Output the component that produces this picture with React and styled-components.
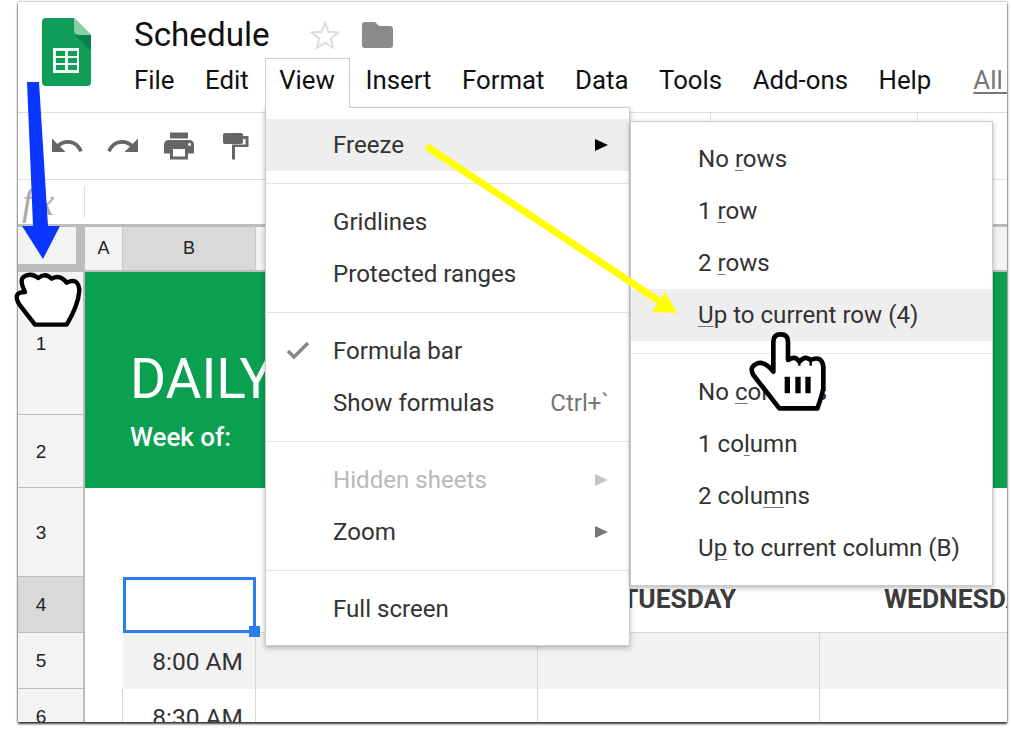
import React from 'react';
import styled, { createGlobalStyle } from 'styled-components';

const Global = createGlobalStyle`
  html, body { margin: 0; background: #fff; overflow: hidden; }
  * { box-sizing: border-box; }
`;
const UI = `"Roboto", "Liberation Sans", sans-serif`;
const SANS = `"Liberation Sans", Arial, sans-serif`;

const Page = styled.div`
  position: relative; width: 1012px; height: 731px;
  padding: 2px 5px 9px 18px; font-family: ${UI}; color: #222;
`;
const Window = styled.div`
  position: relative; height: 100%; display: flex; flex-direction: column;
  overflow: hidden; background: #fff;
`;
const WindowShadow = styled.div`
  height: 100%; box-shadow: 0 2px 2px rgba(0,0,0,.75), 0 0 2px rgba(0,0,0,.55);
`;
const Header = styled.header`
  flex: none; height: 111px; display: flex; border-bottom: 1px solid #ddd;
`;
const LogoSlot = styled.div`flex: none; width: 116px; padding: 16px 0 0 24px;`;
const TitleColumn = styled.div`flex: 1; min-width: 0; display: flex; flex-direction: column;`;
const TitleRow = styled.div`height: 56px; display: flex; align-items: center; padding-top: 9px;`;
const DocTitle = styled.h1`margin: 0; font: 400 33.2px/40px ${UI}; color: #111; width: 136px; white-space: nowrap;`;
const StarIcon = styled.svg`margin-left: 40px; width: 30px; height: 28px; flex: none;`;
const FolderIcon = styled.svg`margin-left: 22px; width: 31px; height: 26px; flex: none;`;
const MenuBar = styled.nav`display: flex; gap: 30.5px; height: 44px; align-items: center; white-space: nowrap;`;
const MenuTitle = styled.span`
  position: relative; font-size: 25.8px; color: #111;
  ${p => p.$open && `
    &::before {
      content: ''; position: absolute; left: -14px; right: -15px; top: -7px; bottom: -13px;
      border: 1px solid #ccc; border-bottom: none; background: #fff; z-index: 3;
    }
    & > span { position: relative; z-index: 4; }
  `}
`;
const AllChanges = styled.span`margin-left: 11.5px; font-size: 25.8px; color: #777; text-decoration: underline; text-underline-offset: 3px;`;

const Toolbar = styled.div`
  flex: none; height: 67px; display: flex; align-items: center; padding-left: 31px;
  border-bottom: 1px solid #ddd;
`;
const ToolIcon = styled.svg`
  flex: none; width: 36px; height: 36px; fill: #666; margin-right: 20px;
`;
const PaintIcon = styled.svg`flex: none; width: 26px; height: 27px; margin-left: 6px; fill: #666;`;
const ToolDivider = styled.span`
  flex: none; align-self: stretch; width: 1px; background: #ddd; margin-left: ${p => p.$gap}px;
`;
const FormulaBar = styled.div`
  flex: none; height: 47px; display: flex; align-items: center; border-bottom: 3px solid #bcbcbc;
`;
const FxLabel = styled.span`
  width: 66px; padding-left: 4px; font: italic 400 38px/1 "Liberation Serif", serif; color: #aaa; letter-spacing: 5px;
`;
const FxDivider = styled.span`width: 1px; height: 32px; background: #ddd;`;

const Sheet = styled.div`
  flex: 1; display: grid; overflow: hidden;
  grid-template-columns: 67px 38px 133px 282px 282px 282px;
  grid-template-rows: 45px 143px 73px 89px 56px 56px 56px;
  font-family: ${SANS}; color: #222;
`;
const Corner = styled.div`background: #bcbcbc; padding: 0 9px 8px 0;`;
const CornerFill = styled.div`height: 100%; background: #f3f3f3;`;
const ColHead = styled.div`
  display: flex; align-items: center; justify-content: center;
  font-size: 18px; border-right: 1px solid #c8c8c8; border-bottom: 2px solid #bcbcbc;
  background: ${p => (p.$active ? '#d9d9d9' : '#f3f3f3')};
`;
const RowHead = styled.div`
  grid-column: 1; display: flex; align-items: center; justify-content: center; padding: 1px 19px 0 0;
  font-size: 19px; border-right: 2px solid #bcbcbc; border-bottom: 1px solid #bcbcbc;
  background: ${p => (p.$active ? '#d9d9d9' : '#f3f3f3')};
`;
const Band = styled.div`
  grid-column: 2 / -1; grid-row: 2 / span 2; background: #0aa050; color: #fff;
  display: flex; flex-direction: column; padding: 76px 0 0 45px; font-family: ${UI};
`;
const BandTitle = styled.div`font-size: 55px; line-height: 62px; white-space: nowrap;`;
const BandSub = styled.div`font-size: 26px; line-height: 30px; margin-top: 12px; font-weight: 500;`;
const Cell = styled.div`
  display: flex; align-items: center; justify-content: ${p => p.$end ? 'flex-end' : 'center'};
  padding-right: ${p => p.$end ? 12 : 0}px; font-family: ${UI}; font-size: 24.5px; color: #333;
  background: ${p => (p.$shade ? '#f2f2f2' : '#fff')};
  ${p => p.$line && 'border-right: 1px solid #d6d6d6;'}
  ${p => p.$under && 'border-bottom: 1px solid #d6d6d6;'}
`;
const DayCell = styled(Cell)`font-size: 26.4px; font-weight: 700; color: #3c3c3c; padding-bottom: 12px; white-space: nowrap;`;
const SelectedCell = styled.div`
  position: relative; border: 3px solid #2b7df0; background: #fff;
  &::after {
    content: ''; position: absolute; right: -7px; bottom: -7px; width: 11px; height: 11px; background: #2b7df0;
  }
`;

const Menu = styled.div`
  position: absolute; left: ${p => p.$left}px; top: ${p => p.$top}px; width: ${p => p.$width}px;
  background: #fff; border: 1px solid #ccc; padding: ${p => p.$pad}px 0 ${p => p.$padEnd}px;
  box-shadow: 0 2px 5px rgba(0,0,0,.28); z-index: 2; font-family: ${UI};
`;
const MenuRow = styled.div`
  position: relative; height: 52px; display: flex; align-items: center; padding: 0 20px 0 67px;
  font-size: 24.1px; white-space: nowrap;
  color: ${p => (p.$disabled ? '#b9b9b9' : '#333')};
  background: ${p => (p.$active ? '#eeeeee' : 'transparent')};
  u { text-decoration-thickness: 1px; text-underline-offset: 3px; text-decoration-color: #777; }
`;
const MenuLabel = styled.span`flex: 1;`;
const Shortcut = styled.span`color: #777;`;
const SubArrow = styled.span`
  width: 0; height: 0; border-style: solid; border-width: 6px 0 6px 13px; margin-right: 1px;
  border-color: transparent transparent transparent ${p => (p.$disabled ? '#c4c4c4' : p.$dark ? '#000' : '#777')};
`;
const CheckIcon = styled.svg`position: absolute; left: 19px; top: 15px; width: 25px; height: 20px;`;
const MenuDivider = styled.div`height: 1px; background: #e4e4e4; margin: 12px 0;`;

const Overlay = styled.svg`position: absolute; left: 0; top: 0; width: 1012px; height: 731px; z-index: 5; pointer-events: none;`;
const Cursor = styled.svg`
  position: absolute; left: ${p => p.$x}px; top: ${p => p.$y}px; z-index: 6;
`;

const Logo = () => (
  <svg width="49" height="68" viewBox="0 0 49 68">
    <path d="M4 0H32L49 17V64a4 4 0 0 1-4 4H4a4 4 0 0 1-4-4V4a4 4 0 0 1 4-4z" fill="#0f9d58" />
    <path d="M33 17L49 33V17z" fill="#0b8048" />
    <path d="M32 0L49 17H37a5 5 0 0 1-5-5z" fill="#87cfac" />
    <rect x="11" y="30" width="26" height="25" fill="#f1f8f4" />
    {[33, 40, 47].map(y => [14, 26].map(x => <rect key={`${x}-${y}`} x={x} y={y} width="9" height="5" fill="#0f9d58" />))}
  </svg>
);

const Freeze = (
  <>
    <MenuRow $active><MenuLabel>Freeze</MenuLabel><SubArrow $dark /></MenuRow>
    <MenuDivider />
    <MenuRow><MenuLabel>Gridlines</MenuLabel></MenuRow>
    <MenuRow><MenuLabel>Protected ranges</MenuLabel></MenuRow>
    <MenuDivider />
    <MenuRow>
      <CheckIcon viewBox="0 0 25 20"><path d="M3 11l6 6L23 3" fill="none" stroke="#888" strokeWidth="3.500" /></CheckIcon>
      <MenuLabel>Formula bar</MenuLabel>
    </MenuRow>
    <MenuRow><MenuLabel>Show formulas</MenuLabel><Shortcut>Ctrl+`</Shortcut></MenuRow>
    <MenuDivider />
    <MenuRow $disabled><MenuLabel>Hidden sheets</MenuLabel><SubArrow $disabled /></MenuRow>
    <MenuRow><MenuLabel>Zoom</MenuLabel><SubArrow /></MenuRow>
    <MenuDivider />
    <MenuRow><MenuLabel>Full screen</MenuLabel></MenuRow>
  </>
);

const FreezeItems = (
  <>
    <MenuRow><span>No <u>r</u>ows</span></MenuRow>
    <MenuRow><span>1 <u>r</u>ow</span></MenuRow>
    <MenuRow><span>2 <u>r</u>ows</span></MenuRow>
    <MenuRow $active><span><u>U</u>p to current row (4)</span></MenuRow>
    <MenuDivider />
    <MenuRow><span>No <u>c</u>olumns</span></MenuRow>
    <MenuRow><span>1 co<u>l</u>umn</span></MenuRow>
    <MenuRow><span>2 colu<u>m</u>ns</span></MenuRow>
    <MenuRow><span>U<u>p</u> to current column (B)</span></MenuRow>
  </>
);

export default function App() {
  return (
    <Page>
      <Global />
      <WindowShadow>
        <Window>
          <Header>
            <LogoSlot><Logo /></LogoSlot>
            <TitleColumn>
              <TitleRow>
                <DocTitle>Schedule</DocTitle>
                <StarIcon viewBox="0 0 30 28">
                  <path d="M15 2l3.600 8.800 9.400.7-7.200 6 2.300 9.200L15 21.800l-8.100 4.900 2.300-9.200-7.200-6 9.400-.7z" fill="none" stroke="#dcdcdc" strokeWidth="2" />
                </StarIcon>
                <FolderIcon viewBox="0 0 31 26">
                  <path d="M3 0h10l4 4h11a3 3 0 0 1 3 3v16a3 3 0 0 1-3 3H3a3 3 0 0 1-3-3V3a3 3 0 0 1 3-3z" fill="#8a8a8a" />
                </FolderIcon>
              </TitleRow>
              <MenuBar>
                <MenuTitle>File</MenuTitle>
                <MenuTitle>Edit</MenuTitle>
                <MenuTitle $open><span>View</span></MenuTitle>
                <MenuTitle>Insert</MenuTitle>
                <MenuTitle>Format</MenuTitle>
                <MenuTitle>Data</MenuTitle>
                <MenuTitle>Tools</MenuTitle>
                <MenuTitle>Add-ons</MenuTitle>
                <MenuTitle>Help</MenuTitle>
                <AllChanges>All changes saved</AllChanges>
              </MenuBar>
            </TitleColumn>
          </Header>
          <Toolbar>
            <ToolIcon viewBox="0 0 24 24"><path d="M12.500 8c-2.650 0-5.050.99-6.900 2.600L2 7v9h9l-3.620-3.620c1.390-1.160 3.160-1.880 5.120-1.880 3.540 0 6.550 2.310 7.600 5.500l2.370-.78C21.080 11.030 17.150 8 12.500 8z" /></ToolIcon>
            <ToolIcon viewBox="0 0 24 24"><path d="M18.400 10.600C16.550 8.990 14.150 8 11.500 8c-4.650 0-8.580 3.030-9.960 7.220L3.900 16c1.050-3.190 4.050-5.500 7.600-5.500 1.950 0 3.730.72 5.120 1.880L13 16h9V7l-3.600 3.600z" /></ToolIcon>
            <ToolIcon viewBox="0 0 24 24"><path d="M19 8H5c-1.660 0-3 1.340-3 3v6h4v4h12v-4h4v-6c0-1.660-1.340-3-3-3zm-3 11H8v-5h8v5zm3-7c-.55 0-1-.45-1-1s.45-1 1-1 1 .45 1 1-.45 1-1 1zm-1-9H6v4h12V3z" /></ToolIcon>
            <PaintIcon viewBox="0 0 26 27">
              <rect x="0" y="0" width="20" height="11" rx="2" />
              <path d="M20 3h5.500v11H12v12.500H9V11.500h13.500V6H20z" />
            </PaintIcon>
            <ToolDivider $gap={461} />
            <ToolDivider $gap={206} />
          </Toolbar>
          <FormulaBar>
            <FxLabel>fx</FxLabel>
            <FxDivider />
          </FormulaBar>
          <Sheet>
            <Corner><CornerFill /></Corner>
            <ColHead>A</ColHead>
            <ColHead $active>B</ColHead>
            <ColHead>C</ColHead>
            <ColHead>D</ColHead>
            <ColHead>E</ColHead>

            <RowHead>1</RowHead>
            <Band>
              <BandTitle>DAILY SCHEDULE</BandTitle>
              <BandSub>Week of:</BandSub>
            </Band>
            <RowHead>2</RowHead>

            <RowHead>3</RowHead>
            <Cell /><Cell /><Cell /><Cell /><Cell />

            <RowHead $active>4</RowHead>
            <Cell />
            <SelectedCell />
            <DayCell $under>MONDAY</DayCell>
            <DayCell $under>TUESDAY</DayCell>
            <DayCell $under>WEDNESDAY</DayCell>

            <RowHead>5</RowHead>
            <Cell />
            <Cell $shade $line $end>8:00 AM</Cell>
            <Cell $shade $line />
            <Cell $shade $line />
            <Cell $shade $line />

            <RowHead>6</RowHead>
            <Cell $line />
            <Cell $line $end>8:30 AM</Cell>
            <Cell $line />
            <Cell $line />
            <Cell $line />
          </Sheet>
          <Menu $left={247} $top={105} $width={365} $pad={11} $padEnd={10}>{Freeze}</Menu>
          <Menu $left={612} $top={119} $width={363} $pad={11} $padEnd={11}>{FreezeItems}</Menu>
        </Window>
      </WindowShadow>

      <Overlay viewBox="0 0 1012 731">
        <path d="M27 82H39L48 226H60L43 259L22 226H33z" fill="#0a35ff" />
        <path d="M429 148L662 303" stroke="#ffff00" strokeWidth="7" strokeLinecap="round" />
        <path d="M665 292L677 313L652 312z" fill="#ffff00" />
      </Overlay>

      <Cursor $x={10} $y={262} width="80" height="75" viewBox="0 0 240 225">
        <path d="M75 188L30 130Q10 100 30 92L45 90Q25 50 45 42Q65 32 85 48Q105 30 125 50Q150 35 170 62Q205 45 208 85Q205 130 170 188Z" fill="#fff" stroke="#000" strokeWidth="13" strokeLinejoin="round" />
      </Cursor>
      <Cursor $x={740} $y={325} width="100" height="95" viewBox="0 0 300 285">
        <path d="M118 250L40 150Q26 125 52 115Q76 108 100 140V50Q100 28 122 28Q144 28 144 50V105Q165 90 178 110Q195 90 212 105Q245 90 250 125V190Q245 215 232 250Z" fill="#fff" stroke="#000" strokeWidth="14" strokeLinejoin="round" />
        <path d="M178 110V122M212 105V122" stroke="#000" strokeWidth="7" />
        <rect x="134" y="155" width="16" height="50" rx="2" />
        <rect x="166" y="155" width="16" height="50" rx="2" />
        <rect x="196" y="155" width="16" height="50" rx="2" />
      </Cursor>
    </Page>
  );
}
